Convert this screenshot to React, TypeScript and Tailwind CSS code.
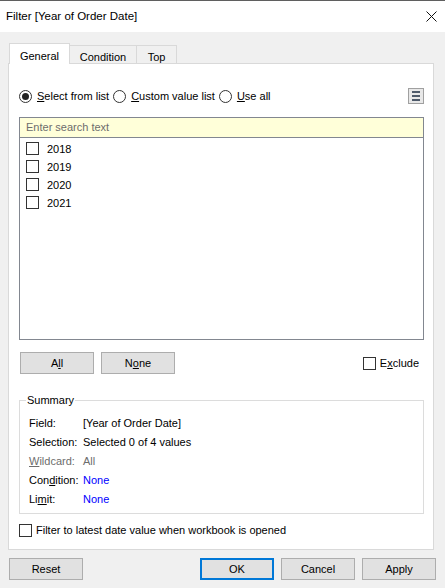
import React from 'react';

function CheckBox() {
  return <span className="block w-[13px] h-[13px] border border-[#333333] bg-white shrink-0" />;
}

function Radio({ checked }: { checked?: boolean }) {
  return (
    <span className="flex w-[13px] h-[13px] rounded-full border border-[#333333] bg-white items-center justify-center shrink-0">
      {checked && <span className="block w-[7px] h-[7px] rounded-full bg-[#222222]" />}
    </span>
  );
}

function Btn({ children, primary }: { children: React.ReactNode; primary?: boolean }) {
  return (
    <button
      className={
        primary
          ? 'h-[22px] w-[74px] bg-[#e1e1e1] border-2 border-[#0078d7] flex items-center justify-center leading-none'
          : 'h-[22px] w-[74px] bg-[#e1e1e1] border border-[#adadad] flex items-center justify-center leading-none'
      }
    >
      {children}
    </button>
  );
}

const years = ['2018', '2019', '2020', '2021'];

export default function App() {
  return (
    <div className="w-[445px] h-[588px] bg-[#f0f0f0] border-t border-[#5f5f5f] flex flex-col text-[11px] text-black font-['Liberation_Sans',Arial,sans-serif] overflow-hidden">
      {/* Title bar */}
      <div className="h-[31px] bg-white flex items-center justify-between pl-[6px] pr-[8px]">
        <span className="text-[11.5px]">Filter [Year of Order Date]</span>
        <svg width="11" height="11" viewBox="0 0 11 11">
          <path d="M0.5 0.5 L10.5 10.5 M10.5 0.5 L0.5 10.5" stroke="#111" strokeWidth="1" fill="none" />
        </svg>
      </div>

      <div className="px-[8px] pt-[11px]">
        {/* Tabs */}
        <div className="relative z-10 flex items-end -mb-px pl-[1px]">
          <div className="h-[21px] w-[61px] bg-white border border-b-0 border-[#d9d9d9] flex items-start justify-center pt-[4px]">
            General
          </div>
          <div className="h-[19px] w-[67px] bg-[#f0f0f0] border border-l-0 border-[#d9d9d9] flex items-start justify-center pt-[3px]">
            Condition
          </div>
          <div className="h-[19px] w-[40px] bg-[#f0f0f0] border border-l-0 border-[#d9d9d9] flex items-start justify-center pt-[3px]">
            Top
          </div>
        </div>

        {/* Panel */}
        <div className="h-[487px] w-[426px] bg-white border border-[#d9d9d9] pl-[10px] pr-[9px] pt-[24px]">
          <div className="h-[16px] flex items-center">
            <div className="flex items-center gap-[5px]">
              <Radio checked />
              <span>
                <u>S</u>elect from list
              </span>
            </div>
            <div className="flex items-center gap-[5px] ml-[4px]">
              <Radio />
              <span>
                <u>C</u>ustom value list
              </span>
            </div>
            <div className="flex items-center gap-[5px] ml-[4px]">
              <Radio />
              <span>
                <u>U</u>se all
              </span>
            </div>
            <div className="ml-auto w-[16px] h-[16px] border border-[#a0a0a0] bg-[#e8e8e8] flex flex-col items-center justify-center gap-[2px]">
              <span className="block w-[8px] h-[2px] bg-[#4e5a6a]" />
              <span className="block w-[8px] h-[2px] bg-[#4e5a6a]" />
              <span className="block w-[8px] h-[2px] bg-[#4e5a6a]" />
            </div>
          </div>

          {/* Search + list */}
          <div className="mt-[13px] w-[405px] h-[223px] border border-[#828790] flex flex-col">
            <div className="h-[20px] bg-[#ffffd9] border-b border-[#828790] flex items-center pl-[6px] text-[#6d6d6d]">
              Enter search text
            </div>
            <div className="flex-1 pl-[6px] pt-[1px]">
              {years.map((y) => (
                <div key={y} className="h-[18px] flex items-center gap-[8px]">
                  <CheckBox />
                  <span className="pt-[2px]">{y}</span>
                </div>
              ))}
            </div>
          </div>

          {/* All / None / Exclude */}
          <div className="mt-[12px] flex items-center pl-[1px] w-[405px]">
            <Btn>
              A<u>l</u>l
            </Btn>
            <div className="ml-[7px]">
              <Btn>
                N<u>o</u>ne
              </Btn>
            </div>
            <div className="ml-auto flex items-center gap-[4px] pr-[5px]">
              <CheckBox />
              <span>
                E<u>x</u>clude
              </span>
            </div>
          </div>

          {/* Summary */}
          <fieldset className="mt-[19px] w-[405px] border border-[#dcdcdc] pl-[9px] pt-[7px] pb-[4px]">
            <legend className="ml-[-3px] px-[1px] leading-[14px]">Summary</legend>
            <div className="h-[19px] flex items-center">
              <span className="w-[54px]">Field:</span>
              <span>[Year of Order Date]</span>
            </div>
            <div className="h-[19px] flex items-center">
              <span className="w-[54px]">Selection:</span>
              <span>Selected 0 of 4 values</span>
            </div>
            <div className="h-[19px] flex items-center text-[#6d6d6d]">
              <span className="w-[54px]">
                <u>W</u>ildcard:
              </span>
              <span>All</span>
            </div>
            <div className="h-[19px] flex items-center">
              <span className="w-[54px]">
                Con<u>d</u>ition:
              </span>
              <span className="text-[#0000ff]">None</span>
            </div>
            <div className="h-[19px] flex items-center">
              <span className="w-[54px]">
                Li<u>m</u>it:
              </span>
              <span className="text-[#0000ff]">None</span>
            </div>
          </fieldset>

          <div className="mt-[8px] h-[16px] flex items-center gap-[4px]">
            <CheckBox />
            <span>Filter to latest date value when workbook is opened</span>
          </div>
        </div>

        {/* Footer */}
        <div className="mt-[8px] flex items-center pl-[1px] pr-[1px]">
          <Btn>Reset</Btn>
          <div className="ml-auto flex items-center gap-[7px]">
            <Btn primary>OK</Btn>
            <Btn>Cancel</Btn>
            <Btn>Apply</Btn>
          </div>
        </div>
      </div>
    </div>
  );
}
